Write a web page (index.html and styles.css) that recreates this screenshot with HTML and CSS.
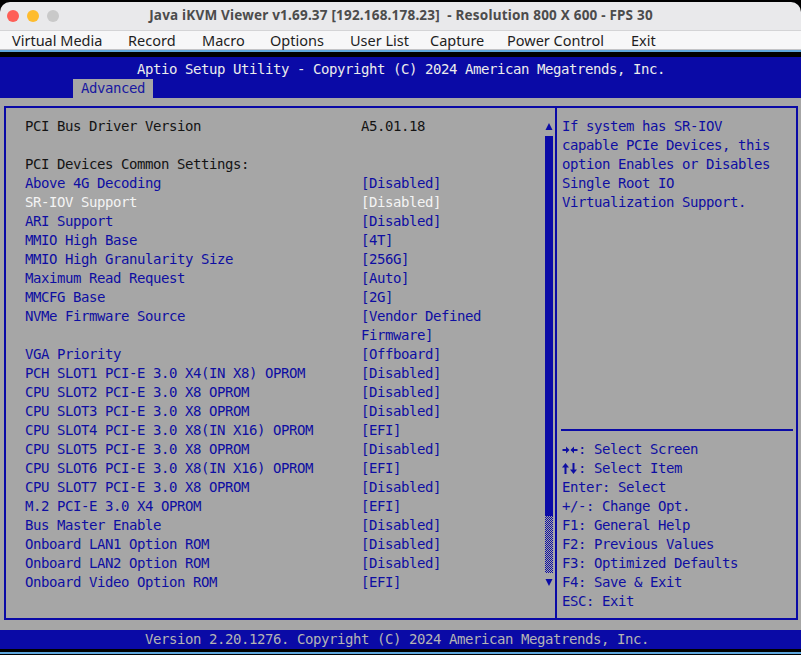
FILE: index.html
```html
<!DOCTYPE html>
<html>
<head>
<meta charset="utf-8">
<link rel="stylesheet" href="styles.css">
</head>
<body>
<div class="window">
  <div class="titlebar">
    <div class="lights">
      <span class="light red"></span>
      <span class="light yellow"></span>
      <span class="light gray"></span>
    </div>
    <div class="title">Java iKVM Viewer v1.69.37 [192.168.178.23]&nbsp; - Resolution 800 X 600 - FPS 30</div>
  </div>
  <div class="menubar">
    <span class="mi m1">Virtual Media</span>
    <span class="mi m2">Record</span>
    <span class="mi m3">Macro</span>
    <span class="mi m4">Options</span>
    <span class="mi m5">User List</span>
    <span class="mi m6">Capture</span>
    <span class="mi m7">Power Control</span>
    <span class="mi m8">Exit</span>
  </div>
  <div class="accent"></div>
  <div class="bios">
    <div class="header">
      <div class="hrow htitle">Aptio Setup Utility - Copyright (C) 2024 American Megatrends, Inc.</div>
      <div class="hrow tabs"><span class="tab">Advanced</span></div>
    </div>
    <div class="main">
      <div class="box">
        <div class="left">
          <div class="items">
            <div class="row k"><span>PCI Bus Driver Version</span><span>A5.01.18</span></div>
            <div class="row"><span>&nbsp;</span><span></span></div>
            <div class="row k"><span>PCI Devices Common Settings:</span><span></span></div>
            <div class="row b"><span>Above 4G Decoding</span><span>[Disabled]</span></div>
            <div class="row w"><span>SR-IOV Support</span><span>[Disabled]</span></div>
            <div class="row b"><span>ARI Support</span><span>[Disabled]</span></div>
            <div class="row b"><span>MMIO High Base</span><span>[4T]</span></div>
            <div class="row b"><span>MMIO High Granularity Size</span><span>[256G]</span></div>
            <div class="row b"><span>Maximum Read Request</span><span>[Auto]</span></div>
            <div class="row b"><span>MMCFG Base</span><span>[2G]</span></div>
            <div class="row b"><span>NVMe Firmware Source</span><span>[Vendor Defined<br>Firmware]</span></div>
            <div class="row b"><span>VGA Priority</span><span>[Offboard]</span></div>
            <div class="row b"><span>PCH SLOT1 PCI-E 3.0 X4(IN X8) OPROM</span><span>[Disabled]</span></div>
            <div class="row b"><span>CPU SLOT2 PCI-E 3.0 X8 OPROM</span><span>[Disabled]</span></div>
            <div class="row b"><span>CPU SLOT3 PCI-E 3.0 X8 OPROM</span><span>[Disabled]</span></div>
            <div class="row b"><span>CPU SLOT4 PCI-E 3.0 X8(IN X16) OPROM</span><span>[EFI]</span></div>
            <div class="row b"><span>CPU SLOT5 PCI-E 3.0 X8 OPROM</span><span>[Disabled]</span></div>
            <div class="row b"><span>CPU SLOT6 PCI-E 3.0 X8(IN X16) OPROM</span><span>[EFI]</span></div>
            <div class="row b"><span>CPU SLOT7 PCI-E 3.0 X8 OPROM</span><span>[Disabled]</span></div>
            <div class="row b"><span>M.2 PCI-E 3.0 X4 OPROM</span><span>[EFI]</span></div>
            <div class="row b"><span>Bus Master Enable</span><span>[Disabled]</span></div>
            <div class="row b"><span>Onboard LAN1 Option ROM</span><span>[Disabled]</span></div>
            <div class="row b"><span>Onboard LAN2 Option ROM</span><span>[Disabled]</span></div>
            <div class="row b"><span>Onboard Video Option ROM</span><span>[EFI]</span></div>
          </div>
          <div class="scroll">
            <div class="arrow"><svg width="8" height="19" viewBox="0 0 8 19"><polygon points="0.5,13 4,6 7.5,13" fill="#0a0aa6"/></svg></div>
            <div class="thumb"></div>
            <div class="track"></div>
            <div class="arrow"><svg width="8" height="19" viewBox="0 0 8 19"><polygon points="0.5,6 4,13 7.5,6" fill="#0a0aa6"/></svg></div>
          </div>
        </div>
        <div class="right">
          <div class="help">If system has SR-IOV<br>capable PCIe Devices, this<br>option Enables or Disables<br>Single Root IO<br>Virtualization Support.</div>
          <div class="sep"></div>
          <div class="keys"><svg class="ar" width="16" height="19" viewBox="0 0 16 19"><path d="M0.5 10H5.5M9.5 10H15.5" stroke="#0e0ea2" stroke-width="2"/><polygon points="4,6.5 7.5,10 4,13.5" fill="#0e0ea2"/><polygon points="12,6.5 8.5,10 12,13.5" fill="#0e0ea2"/></svg>: Select Screen<br><svg class="ar" width="16" height="19" viewBox="0 0 16 19"><path d="M3.5 7V15M11.5 4V12" stroke="#0e0ea2" stroke-width="2"/><polygon points="0,8.5 3.5,4 7,8.5" fill="#0e0ea2"/><polygon points="8,10.5 11.5,15 15,10.5" fill="#0e0ea2"/></svg>: Select Item<br>Enter: Select<br>+/-: Change Opt.<br>F1: General Help<br>F2: Previous Values<br>F3: Optimized Defaults<br>F4: Save &amp; Exit<br>ESC: Exit</div>
        </div>
      </div>
    </div>
    <div class="footer">Version 2.20.1276. Copyright (C) 2024 American Megatrends, Inc.</div>
  </div>
  <div class="bottomline"></div>
</div>
</body>
</html>
```
FILE: styles.css
```css
* { box-sizing: border-box; }
html, body { margin: 0; padding: 0; }
body {
  background: #000;
  width: 801px;
  height: 655px;
  overflow: hidden;
}
.window {
  padding-top: 2px;
}
.titlebar {
  height: 28px;
  background: #e9e9eb;
  border-radius: 10px 10px 0 0;
  display: flex;
  align-items: center;
  position: relative;
}
.lights {
  display: flex;
  gap: 8px;
  padding-left: 7px;
}
.light {
  width: 12px;
  height: 12px;
  border-radius: 50%;
  display: block;
}
.red { background: #fe5f57; }
.yellow { background: #febc2e; }
.gray { background: #c9c9c9; }
.title {
  position: absolute;
  left: 0;
  right: 0;
  top: 5px;
  text-align: center;
  font-family: "Noto Sans", sans-serif;
  font-weight: bold;
  font-size: 13.5px;
  letter-spacing: 0.2px;
  line-height: 17px;
  color: #4c4c4c;
  padding-left: 1px;
}
.menubar {
  height: 20px;
  background: #f7f7f8;
  border-top: 1px solid #d4d4d6;
  border-bottom: 1px solid #c4c4c6;
  display: flex;
  font-family: "Noto Sans", sans-serif;
  font-size: 14.5px;
  line-height: 18px;
  color: #1e1e1e;
  padding-left: 12px;
}
.mi { display: block; }
.m1 { width: 116px; }
.m2 { width: 74px; }
.m3 { width: 68px; }
.m4 { width: 80px; }
.m5 { width: 80px; }
.m6 { width: 77px; }
.m7 { width: 124px; }
.accent {
  height: 2px;
  background: #5ea6dc;
}
.bios {
  border-top: 5px solid #000;
  border-bottom: 3px solid #000;
  font-family: "DejaVu Sans Mono", monospace;
  font-size: 14px;
  letter-spacing: -0.43px;
  line-height: 19px;
  white-space: nowrap;
}
.header {
  background: #0a0aa6;
  padding-top: 3px;
  height: 41px;
}
.hrow { height: 19px; }
.htitle {
  color: #ececec;
  padding-left: 137px;
}
.tabs { padding-left: 73px; }
.tab {
  display: inline-block;
  width: 80px;
  height: 19px;
  background: #a6a6a6;
  color: #1818a0;
  padding-left: 8px;
}
.main {
  background: #a6a6a6;
  height: 532px;
  padding: 8px 3px 10px 4px;
}
.box {
  border: 2px solid #0a0aa6;
  height: 514px;
  display: flex;
}
.left {
  display: flex;
  padding-top: 9px;
  border-right: 2px solid #0a0aa6;
  width: 551px;
  padding-right: 2px;
}
.items {
  width: 539px;
  padding-left: 19px;
}
.row {
  display: grid;
  grid-template-columns: 336px 1fr;
}
.k { color: #141414; }
.b { color: #0e0ea2; }
.w { color: #f4f4f4; }
.scroll {
  width: 8px;
  display: flex;
  flex-direction: column;
}
.arrow { height: 19px; }
.arrow svg { display: block; }
.thumb {
  height: 380px;
  background: #0a0aa6;
}
.track {
  height: 57px;
  background: repeating-conic-gradient(#0a0aa6 0 25%, #a6a6a6 0 50%) 0 0 / 2px 2px;
}
.right {
  flex: 1;
  padding-top: 9px;
  color: #0e0ea2;
}
.help {
  height: 304px;
  padding-left: 5px;
}
.sep {
  height: 19px;
  padding: 8px 3px 9px 4px;
}
.sep::before {
  content: "";
  display: block;
  height: 2px;
  background: #0a0aa6;
}
.keys {
  padding-left: 5px;
}
.ar {
  display: inline-block;
  vertical-align: top;
}
.footer {
  background: #0a0aa6;
  color: #b4b4b4;
  height: 19px;
  padding-left: 145px;
}
.bottomline {
  height: 2px;
  background: #5ea6dc;
}
```
